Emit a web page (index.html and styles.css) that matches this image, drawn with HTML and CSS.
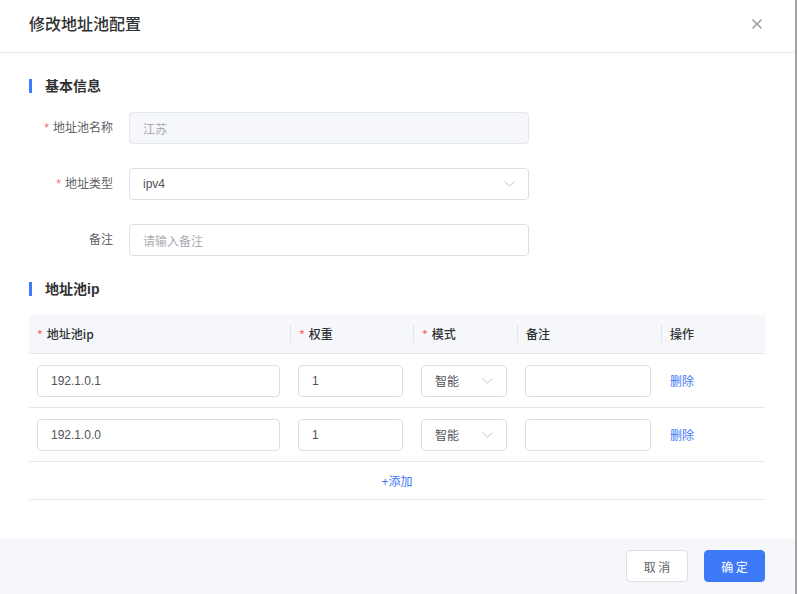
FILE: index.html
```html
<!DOCTYPE html>
<html lang="zh-CN">
<head>
<meta charset="utf-8">
<title>修改地址池配置</title>
<link rel="stylesheet" href="styles.css">
</head>
<body>
<div class="modal">
  <div class="modal-header">
    <div class="modal-title">修改地址池配置</div>
    <svg class="close" width="10" height="10" viewBox="0 0 10 10"><path d="M0.5 0.5 L9.5 9.5 M9.5 0.5 L0.5 9.5" stroke="#909399" stroke-width="1.3" fill="none"/></svg>
  </div>
  <div class="modal-body">
    <div class="section-title">基本信息</div>
    <div class="form">
      <div class="form-item">
        <div class="form-label"><span class="req">*</span>地址池名称</div>
        <div class="field disabled"><span>江苏</span></div>
      </div>
      <div class="form-item">
        <div class="form-label"><span class="req">*</span>地址类型</div>
        <div class="field select"><span class="val">ipv4</span>
          <svg class="chev" width="11" height="6" viewBox="0 0 11 6"><path d="M0.5 0.5 L5.5 5.2 L10.5 0.5" stroke="#c0c4cc" stroke-width="1" fill="none"/></svg>
        </div>
      </div>
      <div class="form-item">
        <div class="form-label">备注</div>
        <div class="field"><span class="ph">请输入备注</span></div>
      </div>
    </div>

    <div class="section-title second">地址池ip</div>
    <div class="table">
      <div class="tr th">
        <div class="cell"><span class="req">*</span>地址池ip</div>
        <div class="cell div"><span class="req">*</span>权重</div>
        <div class="cell div"><span class="req">*</span>模式</div>
        <div class="cell div">备注</div>
        <div class="cell div">操作</div>
      </div>
      <div class="tr td">
        <div class="cell"><div class="field"><span class="val">192.1.0.1</span></div></div>
        <div class="cell"><div class="field"><span class="val">1</span></div></div>
        <div class="cell"><div class="field select"><span class="val">智能</span>
          <svg class="chev" width="11" height="6" viewBox="0 0 11 6"><path d="M0.5 0.5 L5.5 5.2 L10.5 0.5" stroke="#c0c4cc" stroke-width="1" fill="none"/></svg></div></div>
        <div class="cell"><div class="field"></div></div>
        <div class="cell op"><span class="link">删除</span></div>
      </div>
      <div class="tr td">
        <div class="cell"><div class="field"><span class="val">192.1.0.0</span></div></div>
        <div class="cell"><div class="field"><span class="val">1</span></div></div>
        <div class="cell"><div class="field select"><span class="val">智能</span>
          <svg class="chev" width="11" height="6" viewBox="0 0 11 6"><path d="M0.5 0.5 L5.5 5.2 L10.5 0.5" stroke="#c0c4cc" stroke-width="1" fill="none"/></svg></div></div>
        <div class="cell"><div class="field"></div></div>
        <div class="cell op"><span class="link">删除</span></div>
      </div>
      <div class="add-row"><span class="link">+添加</span></div>
    </div>
  </div>
  <div class="modal-footer">
    <button class="btn">取 消</button>
    <button class="btn primary">确 定</button>
  </div>
</div>
</body>
</html>
```

FILE: styles.css
```css
* { box-sizing: border-box; }
html, body { margin: 0; padding: 0; background: #fff; }
body {
  font-family: "Liberation Sans", "Noto Sans CJK SC", sans-serif;
  font-size: 12px;
  color: #606266;
}
.modal {
  width: 797px;
  height: 594px;
  background: #fff;
  border-right: 2px solid #a3a3a3;
  display: flex;
  flex-direction: column;
}
.modal-header {
  height: 53px;
  border-bottom: 1px solid #e4e7ed;
  display: flex;
  justify-content: space-between;
  align-items: flex-start;
  padding: 0 33px 0 29px;
}
.modal-title {
  margin-top: 11px;
  font-size: 16px;
  line-height: 24px;
  font-weight: 500;
  color: #303133;
  font-family: "Noto Sans CJK SC", sans-serif;
}
.close { margin-top: 19px; display: block; }
.modal-body {
  flex: 1;
  padding: 26px 30px 0 29px;
}
.section-title {
  height: 14px;
  line-height: 14px;
  font-size: 14px;
  font-weight: 700;
  color: #303133;
  border-left: 3px solid #3e79f7;
  padding-left: 13px;
  margin-bottom: 19px;
}
.section-title.second { margin-top: 26px; }
.form-item {
  display: flex;
  align-items: center;
  margin-bottom: 24px;
}
.form-item:last-child { margin-bottom: 0; }
.form-label {
  width: 100px;
  padding-right: 16px;
  text-align: right;
  color: #606266;
  line-height: 32px;
}
.req { color: #f56c6c; margin-right: 4px; }
.field {
  width: 400px;
  height: 32px;
  border: 1px solid #dcdfe6;
  border-radius: 4px;
  background: #fff;
  display: flex;
  align-items: center;
  justify-content: space-between;
  padding: 0 13px;
  color: #606266;
}
.field.disabled { background: #f5f7fa; color: #a8abb2; border-color: #e4e7ed; }
.field .ph { color: #a8abb2; }
.field .val { color: #505358; }
.chev { display: block; }
.table .field { width: 100%; }
.tr {
  display: grid;
  grid-template-columns: 261px 123px 104px 144px 1fr;
  border-bottom: 1px solid #e4e7ed;
}
.th {
  height: 39px;
  background: #f5f7fa;
  align-items: center;
}
.th .cell {
  padding-left: 8px;
  font-weight: 500;
  color: #303133;
  line-height: 18px;
  font-family: "Noto Sans CJK SC", sans-serif;
}
.th .cell.div { border-left: 1px solid #e0e3e8; }
.td {
  height: 54px;
  align-items: center;
}
.td .cell { padding: 0 10px 0 8px; }
.td .cell.op { padding-left: 9px; }
.link { color: #3e79f7; }
.add-row {
  height: 38px;
  border-bottom: 1px solid #e4e7ed;
  display: flex;
  align-items: center;
  justify-content: center;
}
.modal-footer {
  height: 56px;
  background: #f5f7fa;
  display: flex;
  justify-content: flex-end;
  align-items: flex-start;
  gap: 16px;
  padding: 12px 30px 0 0;
}
.btn {
  width: 62px;
  height: 32px;
  border: 1px solid #dcdfe6;
  border-radius: 4px;
  background: #fff;
  color: #606266;
  font-family: "Noto Sans CJK SC", sans-serif;
  font-size: 12px;
  padding: 0;
}
.btn.primary {
  width: 61px;
  background: #3e79f7;
  border-color: #3e79f7;
  color: #fff;
}
```
